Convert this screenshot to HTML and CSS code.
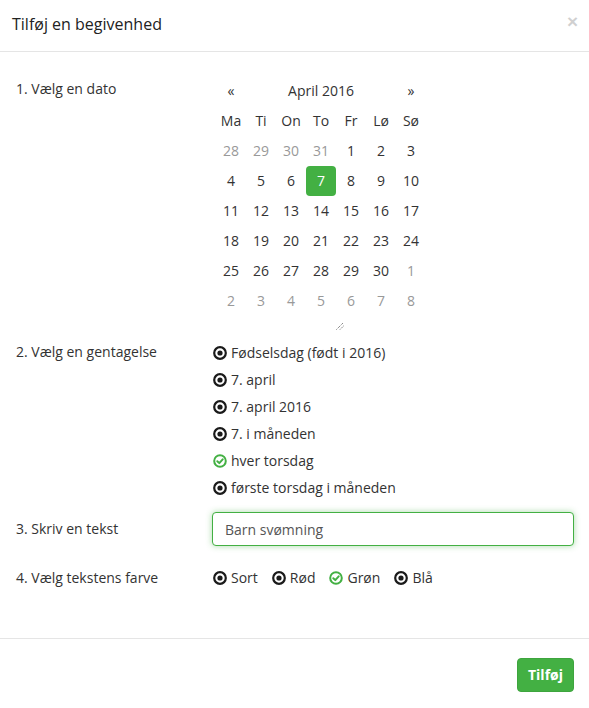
FILE: index.html
```html
<!DOCTYPE html>
<html>
<head>
<meta charset="utf-8">
<link rel="stylesheet" href="styles.css">
</head>
<body>
<div class="modal">
  <div class="modal-header">
    <h4 class="modal-title">Tilføj en begivenhed</h4>
    <span class="close">×</span>
  </div>
  <div class="modal-body">
    <div class="row row-date">
      <div class="label">1. Vælg en dato</div>
      <div class="content">
        <div class="datepicker">
          <div class="dp-grid">
            <div class="cell nav">«</div>
            <div class="cell title">April 2016</div>
            <div class="cell nav">»</div>
            <div class="cell dow">Ma</div><div class="cell dow">Ti</div><div class="cell dow">On</div><div class="cell dow">To</div><div class="cell dow">Fr</div><div class="cell dow">Lø</div><div class="cell dow">Sø</div>
            <div class="cell old">28</div><div class="cell old">29</div><div class="cell old">30</div><div class="cell old">31</div><div class="cell">1</div><div class="cell">2</div><div class="cell">3</div>
            <div class="cell">4</div><div class="cell">5</div><div class="cell">6</div><div class="cell active">7</div><div class="cell">8</div><div class="cell">9</div><div class="cell">10</div>
            <div class="cell">11</div><div class="cell">12</div><div class="cell">13</div><div class="cell">14</div><div class="cell">15</div><div class="cell">16</div><div class="cell">17</div>
            <div class="cell">18</div><div class="cell">19</div><div class="cell">20</div><div class="cell">21</div><div class="cell">22</div><div class="cell">23</div><div class="cell">24</div>
            <div class="cell">25</div><div class="cell">26</div><div class="cell">27</div><div class="cell">28</div><div class="cell">29</div><div class="cell">30</div><div class="cell old">1</div>
            <div class="cell old">2</div><div class="cell old">3</div><div class="cell old">4</div><div class="cell old">5</div><div class="cell old">6</div><div class="cell old">7</div><div class="cell old">8</div>
          </div>
        </div>
        <div class="grip-row">
          <svg class="grip" width="8" height="8" viewBox="0 0 8 8"><path d="M0.5 7.5 L7.5 0.5 M4 7.5 L7.5 4" stroke="#555" stroke-width="1" stroke-dasharray="1 1" fill="none"/></svg>
        </div>
      </div>
    </div>

    <div class="row row-repeat">
      <div class="label">2. Vælg en gentagelse</div>
      <div class="content options">
        <div class="opt"><svg class="ico" viewBox="0 0 14 14"><circle cx="7" cy="7" r="5.8" fill="none" stroke="#1a1a1a" stroke-width="2.2"/><circle cx="7" cy="7" r="2.6" fill="#1a1a1a"/></svg>Fødselsdag (født i 2016)</div>
        <div class="opt"><svg class="ico" viewBox="0 0 14 14"><circle cx="7" cy="7" r="5.8" fill="none" stroke="#1a1a1a" stroke-width="2.2"/><circle cx="7" cy="7" r="2.6" fill="#1a1a1a"/></svg>7. april</div>
        <div class="opt"><svg class="ico" viewBox="0 0 14 14"><circle cx="7" cy="7" r="5.8" fill="none" stroke="#1a1a1a" stroke-width="2.2"/><circle cx="7" cy="7" r="2.6" fill="#1a1a1a"/></svg>7. april 2016</div>
        <div class="opt"><svg class="ico" viewBox="0 0 14 14"><circle cx="7" cy="7" r="5.8" fill="none" stroke="#1a1a1a" stroke-width="2.2"/><circle cx="7" cy="7" r="2.6" fill="#1a1a1a"/></svg>7. i måneden</div>
        <div class="opt"><svg class="ico" viewBox="0 0 14 14"><circle cx="7" cy="7" r="5.8" fill="none" stroke="#43b043" stroke-width="2"/><path d="M4.3 7.2 L6.3 9.1 L9.7 5.3" fill="none" stroke="#43b043" stroke-width="2" stroke-linecap="round" stroke-linejoin="round"/></svg>hver torsdag</div>
        <div class="opt"><svg class="ico" viewBox="0 0 14 14"><circle cx="7" cy="7" r="5.8" fill="none" stroke="#1a1a1a" stroke-width="2.2"/><circle cx="7" cy="7" r="2.6" fill="#1a1a1a"/></svg>første torsdag i måneden</div>
      </div>
    </div>

    <div class="row row-text">
      <div class="label">3. Skriv en tekst</div>
      <div class="content">
        <input class="text-input" type="text" value="Barn svømning">
      </div>
    </div>

    <div class="row row-color">
      <div class="label">4. Vælg tekstens farve</div>
      <div class="content colors">
        <span class="copt"><svg class="ico" viewBox="0 0 14 14"><circle cx="7" cy="7" r="5.8" fill="none" stroke="#1a1a1a" stroke-width="2.2"/><circle cx="7" cy="7" r="2.6" fill="#1a1a1a"/></svg>Sort</span>
        <span class="copt"><svg class="ico" viewBox="0 0 14 14"><circle cx="7" cy="7" r="5.8" fill="none" stroke="#1a1a1a" stroke-width="2.2"/><circle cx="7" cy="7" r="2.6" fill="#1a1a1a"/></svg>Rød</span>
        <span class="copt"><svg class="ico" viewBox="0 0 14 14"><circle cx="7" cy="7" r="5.8" fill="none" stroke="#43b043" stroke-width="2"/><path d="M4.3 7.2 L6.3 9.1 L9.7 5.3" fill="none" stroke="#43b043" stroke-width="2" stroke-linecap="round" stroke-linejoin="round"/></svg>Grøn</span>
        <span class="copt"><svg class="ico" viewBox="0 0 14 14"><circle cx="7" cy="7" r="5.8" fill="none" stroke="#1a1a1a" stroke-width="2.2"/><circle cx="7" cy="7" r="2.6" fill="#1a1a1a"/></svg>Blå</span>
      </div>
    </div>
  </div>
  <div class="modal-footer">
    <button class="btn">Tilføj</button>
  </div>
</div>
</body>
</html>
```
FILE: styles.css
```css
* { box-sizing: border-box; }
html, body { margin: 0; padding: 0; background: #fff; }
body {
  font-family: "Open Sans", "Liberation Sans", sans-serif;
  font-size: 14px;
  line-height: 20px;
  color: #333;
  width: 589px;
  height: 708px;
  overflow: hidden;
}
.modal { width: 589px; }
.modal-header {
  display: flex;
  justify-content: space-between;
  align-items: center;
  height: 52px;
  padding: 0 11px 0 12px;
  border-bottom: 1px solid #e5e5e5;
}
.modal-title {
  margin: 0;
  font-size: 16px;
  font-weight: 400;
  line-height: 24px;
  color: #222;
  padding-bottom: 4px;
}
.close {
  font-family: "Liberation Sans", sans-serif;
  font-size: 19px;
  font-weight: 700;
  color: #000;
  opacity: 0.18;
  line-height: 20px;
  padding-bottom: 7px;
}
.modal-body { padding: 20px 15px 50px 16px; }
.row {
  display: grid;
  grid-template-columns: 196px 1fr;
}
.label { padding-top: 7px; }
.row-repeat { margin-top: 5px; }
.row-repeat .label { padding-top: 3px; line-height: 20px; }
.row-text { margin-top: 11px; }
.row-text .label { padding-top: 7px; }
.row-color { margin-top: 15px; }

.datepicker { padding: 4px; width: 218px; }
.dp-grid {
  display: grid;
  grid-template-columns: repeat(7, 30px);
  grid-auto-rows: 30px;
}
.cell {
  display: flex;
  align-items: center;
  justify-content: center;
  border-radius: 4px;
  color: #333;
}
.cell.title { grid-column: span 5; }
.cell.old { color: #999; }
.cell.active { background: #43b043; color: #fff; }
.grip-row { height: 14px; padding-left: 124px; padding-top: 2px; }
.grip { display: block; }

.options .opt {
  display: flex;
  align-items: center;
  height: 27px;
}
.ico { width: 14px; height: 14px; margin-right: 4px; flex: none; margin-left: 1px; }

.text-input {
  width: 362px;
  height: 34px;
  border: 1px solid #43b043;
  border-radius: 4px;
  box-shadow: 0 0 6px rgba(67, 176, 67, 0.45);
  padding: 6px 12px;
  font-family: "Open Sans", "Liberation Sans", sans-serif;
  font-size: 14px;
  color: #555;
  outline: none;
}
.colors {
  display: flex;
  align-items: center;
  gap: 13px;
  padding-top: 7px;
}
.copt { display: flex; align-items: center; }

.modal-footer {
  border-top: 1px solid #e5e5e5;
  padding: 19px 15px 15px;
  display: flex;
  justify-content: flex-end;
}
.btn {
  font-family: "Open Sans", "Liberation Sans", sans-serif;
  font-size: 14px;
  font-weight: 700;
  line-height: 20px;
  color: #fff;
  background: #43b043;
  border: 1px solid #3ea53e;
  border-radius: 4px;
  padding: 6px 10px;
  height: 34px;
}
```
